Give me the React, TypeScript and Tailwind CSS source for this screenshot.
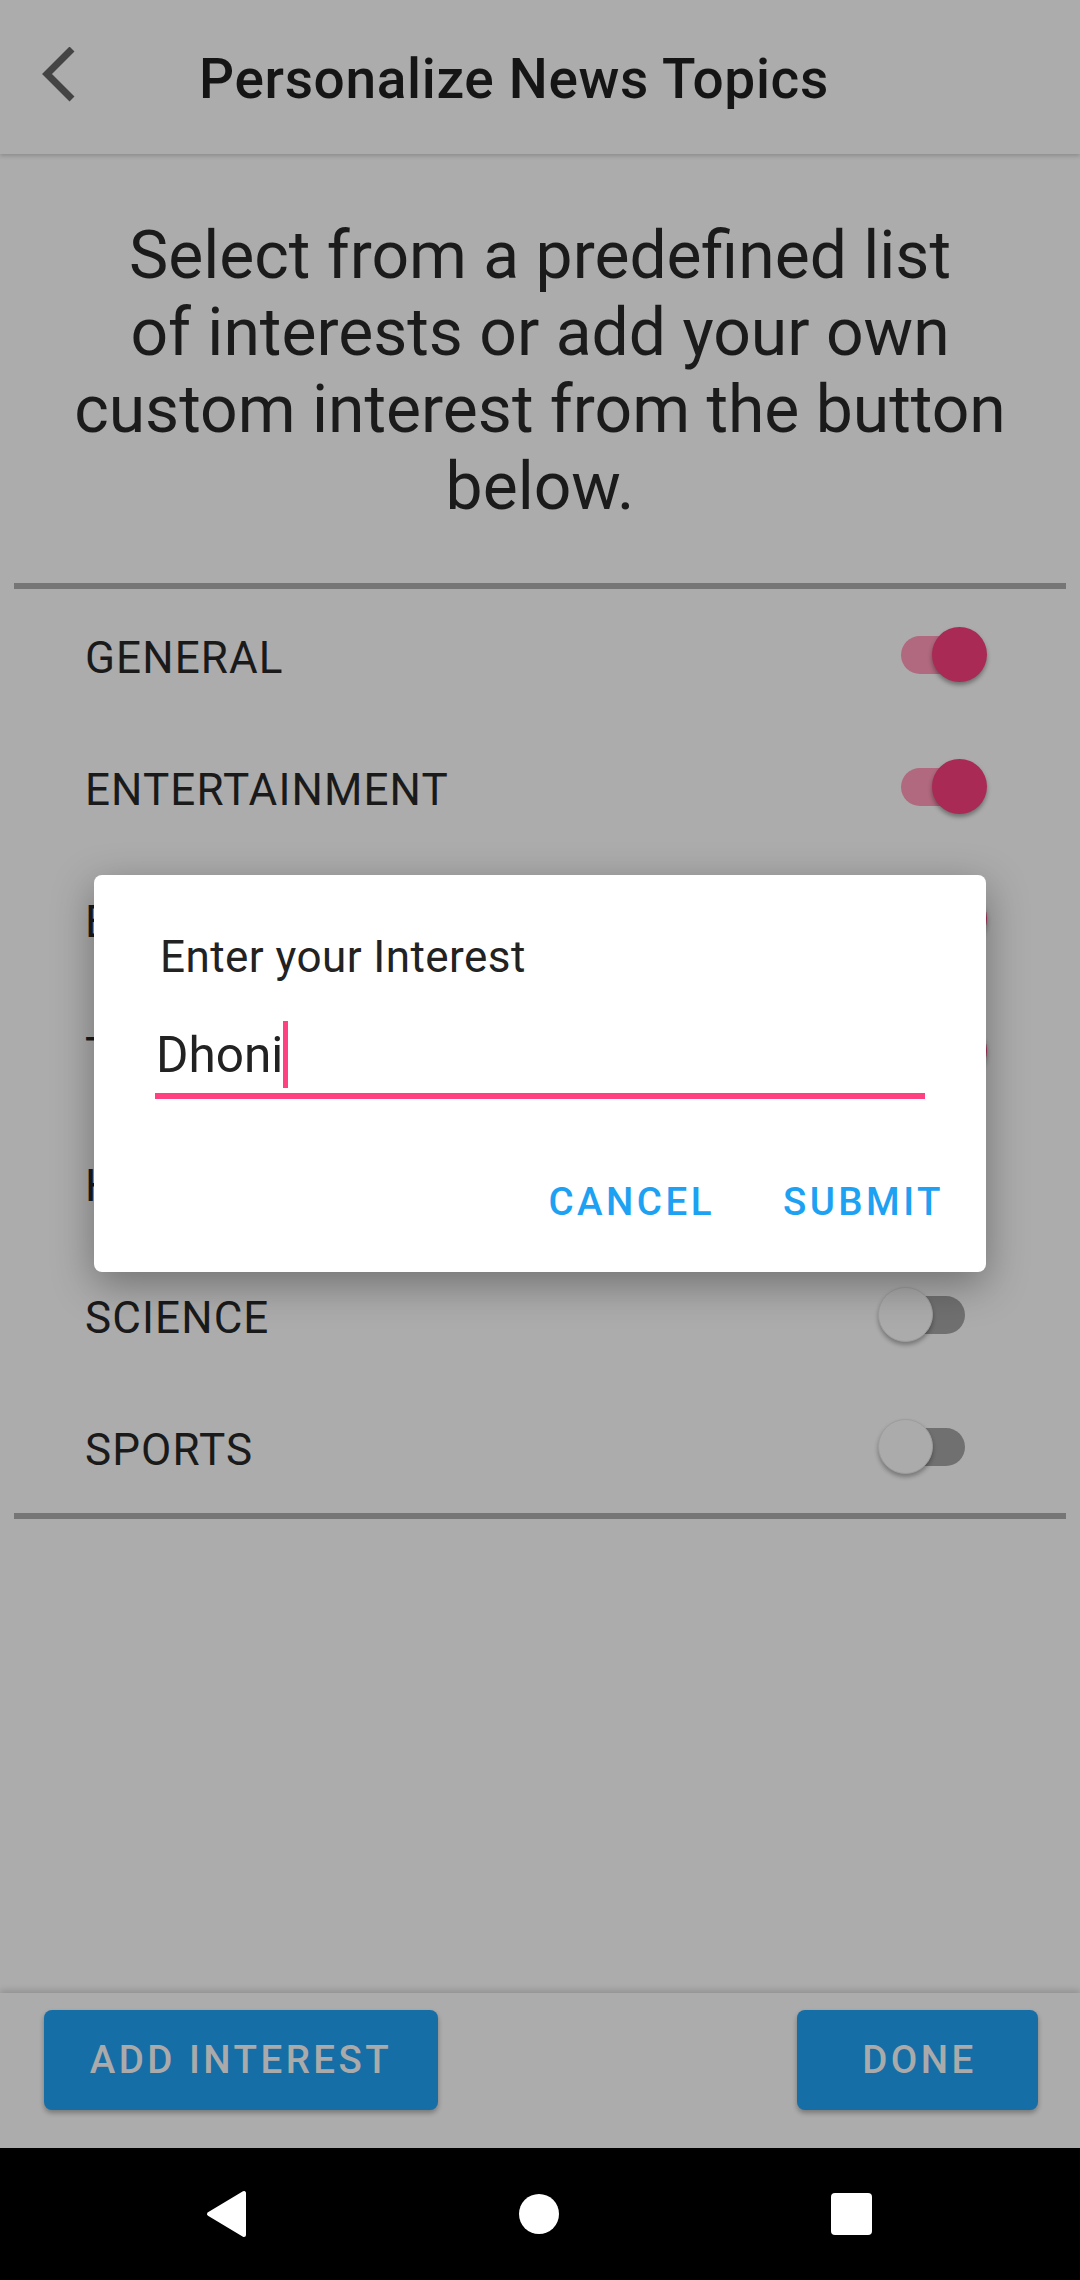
const topics = [
  { name: "GENERAL", on: true },
  { name: "ENTERTAINMENT", on: true },
  { name: "BUSINESS", on: true },
  { name: "TECHNOLOGY", on: true },
  { name: "HEALTH", on: false },
  { name: "SCIENCE", on: false },
  { name: "SPORTS", on: false },
];

function Toggle({ on }: { on: boolean }) {
  return (
    <div className="relative w-[109px] h-[56px]">
      <div
        className={
          on
            ? "absolute left-[23px] top-[9px] w-[64px] h-[38px] rounded-full bg-[#b0697e]"
            : "absolute left-[23px] top-[9px] w-[64px] h-[38px] rounded-full bg-[#707070]"
        }
      />
      {on ? (
        <div className="absolute left-[54px] top-0 w-[55px] h-[55px] rounded-full bg-[#a92a55] shadow-[0_3px_4px_rgba(0,0,0,0.35)]" />
      ) : (
        <div className="absolute left-0 top-0 w-[55px] h-[55px] rounded-full bg-[#ababab] border border-[#9d9d9d] shadow-[0_3px_4px_rgba(0,0,0,0.3)]" />
      )}
    </div>
  );
}

export default function App() {
  return (
    <div className="relative w-[1080px] h-[2280px] flex flex-col bg-[#acacac] font-['Roboto',sans-serif] overflow-hidden">
      {/* app bar */}
      <div className="relative z-10 h-[154px] flex items-center shrink-0 bg-[#acacac] shadow-[0_2px_4px_rgba(0,0,0,0.18)]">
        <svg className="ml-[40px]" width="40" height="60" viewBox="0 0 40 60">
          <path d="M32 10 L7 35 L32 60" transform="translate(0 -8)" fill="none" stroke="#444" strokeWidth="7" />
        </svg>
        <div className="ml-[119px] text-[55px] font-medium tracking-[0.012em] text-[#151515] leading-none pt-[4px]">
          Personalize News Topics
        </div>
      </div>

      {/* content */}
      <div className="flex-1 flex flex-col">
        <p className="mt-[63px] text-center text-[66px] leading-[77px] text-[#1b1b1b]">
          Select from a predefined list
          <br />
          of interests or add your own
          <br />
          custom interest from the button
          <br />
          below.
        </p>
        <div className="mt-[58px] mx-[14px] h-[6px] bg-[#767676]" />
        <div className="flex flex-col">
          {topics.map((t) => (
            <div key={t.name} className="h-[132px] flex items-center justify-between pl-[85px] pr-[93px]">
              <span className="pt-[5px] text-[44px] tracking-[0.025em] text-[#1a1a1a]">{t.name}</span>
              <Toggle on={t.on} />
            </div>
          ))}
        </div>
        <div className="mx-[14px] h-[6px] bg-[#767676]" />
      </div>

      {/* bottom bar */}
      <div className="relative z-10 h-[155px] shrink-0 bg-[#acacac] shadow-[0_-3px_6px_rgba(0,0,0,0.15)] flex items-start justify-between pt-[17px] pl-[44px] pr-[42px]">
        <button className="w-[394px] h-[100px] rounded-[8px] bg-[#166ea6] text-[#aaaaaa] text-[38.5px] font-medium tracking-[0.09em] shadow-[0_3px_5px_rgba(0,0,0,0.3)]">
          ADD INTEREST
        </button>
        <button className="w-[241px] h-[100px] rounded-[8px] bg-[#166ea6] text-[#aaaaaa] text-[38.5px] font-medium tracking-[0.09em] shadow-[0_3px_5px_rgba(0,0,0,0.3)] pl-[4px]">
          DONE
        </button>
      </div>

      {/* system nav */}
      <div className="h-[132px] shrink-0 bg-black flex items-center">
        <svg className="ml-[205px]" width="42" height="48" viewBox="0 0 42 48">
          <path d="M39 3 L39 45 L4 24 Z" fill="#fff" stroke="#fff" strokeWidth="4" strokeLinejoin="round" />
        </svg>
        <div className="ml-[272px] w-[40px] h-[40px] rounded-full bg-white" />
        <div className="ml-[272px] w-[41px] h-[42px] rounded-[4px] bg-white" />
      </div>

      {/* dialog */}
      <div className="absolute left-[94px] top-[875px] w-[892px] h-[397px] rounded-[8px] bg-white shadow-[0_12px_40px_rgba(0,0,0,0.35)] flex flex-col">
        <div className="pt-[56px] pl-[66px] text-[44px] leading-[52px] tracking-[0.01em] text-[#222]">Enter your Interest</div>
        <div className="mt-[38px] ml-[61px] w-[770px]">
          <div className="flex items-center h-[67px] pl-[1px]">
            <span className="text-[49.5px] leading-[58px] text-[#222]">Dhoni</span>
            <span className="w-[5px] h-[67px] bg-[#ff4081]" />
          </div>
          <div className="mt-[5px] h-[6px] bg-[#ff4081]" />
        </div>
        <div className="mt-[80px] flex justify-end pr-[42px] gap-[68px] text-[38.5px] leading-[45px] font-medium tracking-[0.09em] text-[#1da1f2]">
          <span>CANCEL</span>
          <span>SUBMIT</span>
        </div>
      </div>
    </div>
  );
}
